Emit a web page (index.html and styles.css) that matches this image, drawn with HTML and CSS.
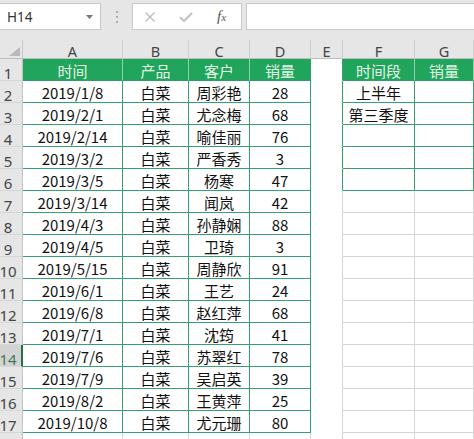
FILE: index.html
```html
<!DOCTYPE html>
<html lang="zh">
<head>
<meta charset="utf-8">
<title>Sheet</title>
<link rel="stylesheet" href="styles.css">
</head>
<body>
<div class="app">
  <div class="toolbar">
    <div class="namebox">
      <span>H14</span>
      <svg class="caret" width="7" height="4" viewBox="0 0 7 4"><path d="M0 0h7L3.5 4z" fill="#777"/></svg>
    </div>
    <div class="sep"><i></i><i></i><i></i></div>
    <div class="fxbox">
      <svg width="10" height="10" viewBox="0 0 10 10"><path d="M0.5 0.5L9.5 9.5M9.5 0.5L0.5 9.5" stroke="#bcbcbc" stroke-width="1.4" fill="none"/></svg>
      <svg width="14" height="10" viewBox="0 0 14 10"><path d="M1 5.2L5 9L13 1" stroke="#c2c2c2" stroke-width="2" fill="none"/></svg>
      <span class="fx"><i>f</i><i class="x">x</i></span>
    </div>
    <div class="finput"></div>
  </div>

  <div class="sheet">
    <div class="c corner"><svg width="11" height="9" viewBox="0 0 11 9"><path d="M11 0V9H0z" fill="#b9b9b9"/></svg></div>
    <div class="c ch">A</div><div class="c ch">B</div><div class="c ch">C</div><div class="c ch">D</div><div class="c ch">E</div><div class="c ch">F</div><div class="c ch">G</div>

    <div class="c rh">1</div>
    <div class="c hd">时间</div><div class="c hd">产品</div><div class="c hd">客户</div><div class="c hd hd-end">销量</div>
    <div class="c e"></div>
    <div class="c hd">时间段</div><div class="c hd">销量</div>

    <div class="c rh">2</div>
    <div class="c td">2019/1/8</div><div class="c td">白菜</div><div class="c td">周彩艳</div><div class="c td">28</div>
    <div class="c e"></div><div class="c td">上半年</div><div class="c td"></div>

    <div class="c rh">3</div>
    <div class="c td">2019/2/1</div><div class="c td">白菜</div><div class="c td">尤念梅</div><div class="c td">68</div>
    <div class="c e"></div><div class="c td">第三季度</div><div class="c td"></div>

    <div class="c rh">4</div>
    <div class="c td">2019/2/14</div><div class="c td">白菜</div><div class="c td">喻佳丽</div><div class="c td">76</div>
    <div class="c e"></div><div class="c td"></div><div class="c td"></div>

    <div class="c rh">5</div>
    <div class="c td">2019/3/2</div><div class="c td">白菜</div><div class="c td">严香秀</div><div class="c td">3</div>
    <div class="c e"></div><div class="c td"></div><div class="c td"></div>

    <div class="c rh">6</div>
    <div class="c td">2019/3/5</div><div class="c td">白菜</div><div class="c td">杨寒</div><div class="c td">47</div>
    <div class="c e"></div><div class="c td"></div><div class="c td"></div>

    <div class="c rh">7</div>
    <div class="c td">2019/3/14</div><div class="c td">白菜</div><div class="c td">闻岚</div><div class="c td">42</div>
    <div class="c e e-grey"></div><div class="c gc"></div><div class="c gc"></div>

    <div class="c rh">8</div>
    <div class="c td">2019/4/3</div><div class="c td">白菜</div><div class="c td">孙静娴</div><div class="c td">88</div>
    <div class="c e e-grey"></div><div class="c gc"></div><div class="c gc"></div>

    <div class="c rh">9</div>
    <div class="c td">2019/4/5</div><div class="c td">白菜</div><div class="c td">卫琦</div><div class="c td">3</div>
    <div class="c e e-grey"></div><div class="c gc"></div><div class="c gc"></div>

    <div class="c rh">10</div>
    <div class="c td">2019/5/15</div><div class="c td">白菜</div><div class="c td">周静欣</div><div class="c td">91</div>
    <div class="c e e-grey"></div><div class="c gc"></div><div class="c gc"></div>

    <div class="c rh">11</div>
    <div class="c td">2019/6/1</div><div class="c td">白菜</div><div class="c td">王艺</div><div class="c td">24</div>
    <div class="c e e-grey"></div><div class="c gc"></div><div class="c gc"></div>

    <div class="c rh">12</div>
    <div class="c td">2019/6/8</div><div class="c td">白菜</div><div class="c td">赵红萍</div><div class="c td">68</div>
    <div class="c e e-grey"></div><div class="c gc"></div><div class="c gc"></div>

    <div class="c rh">13</div>
    <div class="c td">2019/7/1</div><div class="c td">白菜</div><div class="c td">沈筠</div><div class="c td">41</div>
    <div class="c e e-grey"></div><div class="c gc"></div><div class="c gc"></div>

    <div class="c rh sel">14</div>
    <div class="c td">2019/7/6</div><div class="c td">白菜</div><div class="c td">苏翠红</div><div class="c td">78</div>
    <div class="c e e-grey"></div><div class="c gc"></div><div class="c gc"></div>

    <div class="c rh">15</div>
    <div class="c td">2019/7/9</div><div class="c td">白菜</div><div class="c td">吴启英</div><div class="c td">39</div>
    <div class="c e e-grey"></div><div class="c gc"></div><div class="c gc"></div>

    <div class="c rh">16</div>
    <div class="c td">2019/8/2</div><div class="c td">白菜</div><div class="c td">王黄萍</div><div class="c td">25</div>
    <div class="c e e-grey"></div><div class="c gc"></div><div class="c gc"></div>

    <div class="c rh">17</div>
    <div class="c td">2019/10/8</div><div class="c td">白菜</div><div class="c td">尤元珊</div><div class="c td">80</div>
    <div class="c e e-grey"></div><div class="c gc"></div><div class="c gc"></div>

    <div class="c rh"></div>
    <div class="c gc"></div><div class="c gc"></div><div class="c gc"></div><div class="c gc"></div>
    <div class="c gc"></div><div class="c gc"></div><div class="c gc"></div>
  </div>
</div>
</body>
</html>
```

FILE: styles.css
```css
* {
  box-sizing: border-box;
  margin: 0;
  padding: 0;
}

html, body {
  width: 474px;
  height: 439px;
  overflow: hidden;
  background: #ffffff;
}

body {
  font-family: "Noto Sans CJK SC", "Noto Sans", sans-serif;
}

/* ---------- formula bar ---------- */
.toolbar {
  display: flex;
  align-items: flex-start;
  height: 40px;
  padding-top: 3px;
  background: #e6e6e6;
}

.namebox {
  width: 101px;
  height: 27px;
  background: #ffffff;
  border: 1px solid #c9c9c9;
  border-left: none;
  display: flex;
  align-items: center;
  justify-content: space-between;
  padding: 0 7px 0 7px;
  font-family: "Noto Sans", sans-serif;
  font-size: 13.5px;
  color: #333333;
}

.sep {
  width: 31px;
  height: 27px;
  display: flex;
  flex-direction: column;
  align-items: center;
  justify-content: center;
  gap: 3px;
}

.sep i {
  display: block;
  width: 2px;
  height: 2px;
  background: #ababab;
}

.fxbox {
  width: 110px;
  height: 27px;
  background: #ffffff;
  border: 1px solid #c9c9c9;
  display: flex;
  align-items: center;
  gap: 24px;
  padding-left: 12px;
}

.fx {
  font-family: "Liberation Serif", serif;
  color: #555555;
  font-size: 15px;
  line-height: 1;
}

.fx .x {
  font-size: 11px;
}

.finput {
  flex: 1;
  height: 27px;
  margin-left: 4px;
  background: #ffffff;
  border: 1px solid #c9c9c9;
  border-right: none;
}

/* ---------- sheet ---------- */
.sheet {
  display: grid;
  grid-template-columns: 23px 100px 66px 61px 61px 32px 72px 59px;
  grid-template-rows: 19px repeat(18, 22px);
}

.c {
  display: flex;
  align-items: center;
  justify-content: center;
  border-right: 1px solid #d4d4d4;
  border-bottom: 1px solid #d4d4d4;
  font-size: 15px;
  color: #111111;
  white-space: nowrap;
  overflow: hidden;
  padding-top: 1px;
}

.corner {
  background: #e6e6e6;
  border-right-color: #c6c6c6;
  border-bottom-color: #bdbdbd;
  align-items: flex-end;
  justify-content: flex-end;
  padding: 0 2px 2px 0;
}

.ch {
  background: #e6e6e6;
  border-right-color: #cfcfcf;
  border-bottom-color: #bdbdbd;
  font-family: "Noto Sans", sans-serif;
  font-size: 14.5px;
  color: #444444;
  padding-top: 3px;
}

.rh {
  background: #e6e6e6;
  border-right-color: #c2c2c2;
  border-bottom-color: #d6d6d6;
  font-family: "Noto Sans", sans-serif;
  font-size: 15px;
  color: #444444;
  justify-content: center;
  padding-right: 6px;
  padding-top: 6px;
}

.rh.sel {
  background: #d3d3d3;
  color: #3d7a58;
  border-right: 2px solid #217346;
  padding-right: 5px;
}

.hd {
  background: #21a55c;
  color: #e2f7e6;
  border-right-color: #8dd3a8;
  border-bottom-color: #2f9d69;
}

.hd-end {
  border-right-color: #2f9d69;
}

.td {
  border-right-color: #36a070;
  border-bottom-color: #36a070;
}

.e {
  border-bottom-color: #ffffff;
  border-right-color: #36a070;
}

.e-grey {
  border-right-color: #d4d4d4;
}

.gc {
  border-color: #d4d4d4;
}
```
